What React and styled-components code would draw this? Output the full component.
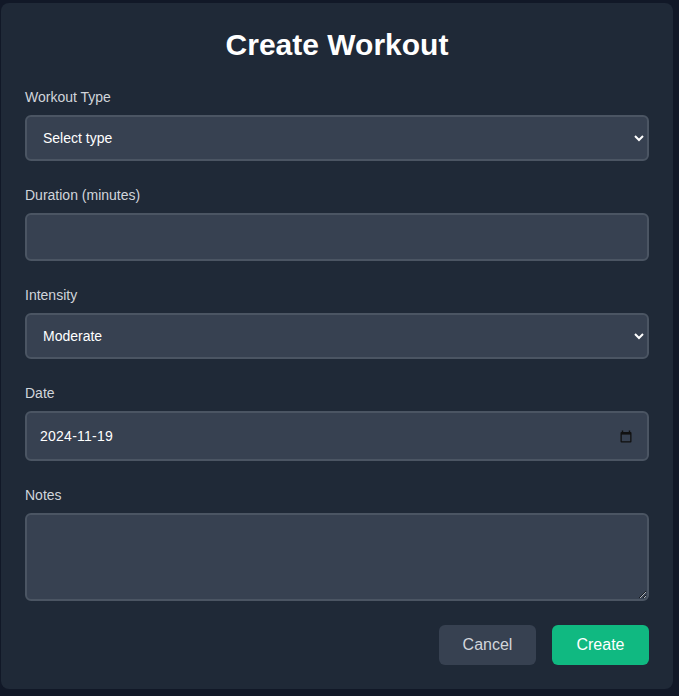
import React from "react";
import styled, { createGlobalStyle } from "styled-components";

const Global = createGlobalStyle`
  *, *::before, *::after { box-sizing: border-box; }
  html, body { margin: 0; padding: 0; background: #111827; }
  body { font-family: "Liberation Sans", Arial, sans-serif; }
`;

const Page = styled.div`
  padding: 3px 0 8px 1px;
  min-height: 696px;
`;

const Panel = styled.form`
  width: 672px;
  background: #1f2937;
  border-radius: 8px;
  padding: 24px;
`;

const Title = styled.h2`
  margin: 0 0 24px;
  font-size: 30px;
  line-height: 36px;
  font-weight: 700;
  color: #ffffff;
  text-align: center;
`;

const Field = styled.div`
  display: flex;
  flex-direction: column;
  margin-bottom: 24px;
`;

const Label = styled.label`
  font-size: 14px;
  line-height: 20px;
  color: #d1d5db;
  margin-bottom: 8px;
`;

const controlBase = `
  width: 100%;
  background: #374151;
  border: 2px solid #4b5563;
  border-radius: 6px;
  color: #ffffff;
  font-family: "Liberation Sans", Arial, sans-serif;
  font-size: 14px;
  line-height: 20px;
  padding: 12px;
  margin: 0;
  outline: none;
`;

const Select = styled.select`
  ${controlBase}
  height: 46px;
`;

const Input = styled.input`
  ${controlBase}
  height: 48px;
`;

const DateBox = styled.div`
  ${controlBase}
  height: 50px;
  display: flex;
  align-items: center;
  padding: 0 15px 0 13px;
`;

const DateText = styled.input`
  flex: 1;
  min-width: 0;
  background: transparent;
  border: none;
  outline: none;
  padding: 0;
  margin: 0;
  color: #ffffff;
  font-family: "Liberation Sans", Arial, sans-serif;
  font-size: 14px;
  letter-spacing: 0.25px;
  line-height: 20px;
`;

const CalendarIcon = styled.svg`
  width: 12px;
  height: 13px;
  flex: none;
  display: block;
`;

const TextArea = styled.textarea`
  ${controlBase}
  height: 88px;
  resize: vertical;
  display: block;
`;

const Actions = styled.div`
  display: flex;
  justify-content: flex-end;
  gap: 16px;
`;

const Button = styled.button`
  font-family: "Liberation Sans", Arial, sans-serif;
  font-size: 16px;
  line-height: 24px;
  height: 40px;
  width: 97px;
  padding: 0;
  border: none;
  border-radius: 6px;
  cursor: pointer;
  background: ${(p) => (p.$primary ? "#10b981" : "#374151")};
  color: ${(p) => (p.$primary ? "#ffffff" : "#d1d5db")};
`;

export default function App() {
  return (
    <>
      <Global />
      <Page>
        <Panel onSubmit={(e) => e.preventDefault()}>
          <Title>Create Workout</Title>
          <Field>
            <Label>Workout Type</Label>
            <Select defaultValue="">
              <option value="">Select type</option>
              <option value="running">Running</option>
              <option value="cycling">Cycling</option>
              <option value="strength">Strength</option>
            </Select>
          </Field>
          <Field>
            <Label>Duration (minutes)</Label>
            <Input type="number" />
          </Field>
          <Field>
            <Label>Intensity</Label>
            <Select defaultValue="moderate">
              <option value="low">Low</option>
              <option value="moderate">Moderate</option>
              <option value="high">High</option>
            </Select>
          </Field>
          <Field>
            <Label>Date</Label>
            <DateBox>
              <DateText type="text" defaultValue="2024-11-19" />
              <CalendarIcon viewBox="0 0 12 13" aria-hidden="true">
                <path
                  d="M2.5 0.5v1.5M9.5 0.5v1.5"
                  stroke="#111111"
                  strokeWidth="1.4"
                  fill="none"
                />
                <rect x="0.5" y="2" width="11" height="10.5" rx="1" fill="#111111" />
                <rect x="1.8" y="4.6" width="8.4" height="6.6" fill="#374151" />
              </CalendarIcon>
            </DateBox>
          </Field>
          <Field>
            <Label>Notes</Label>
            <TextArea rows={3} />
          </Field>
          <Actions>
            <Button type="button">Cancel</Button>
            <Button type="submit" $primary>
              Create
            </Button>
          </Actions>
        </Panel>
      </Page>
    </>
  );
}
